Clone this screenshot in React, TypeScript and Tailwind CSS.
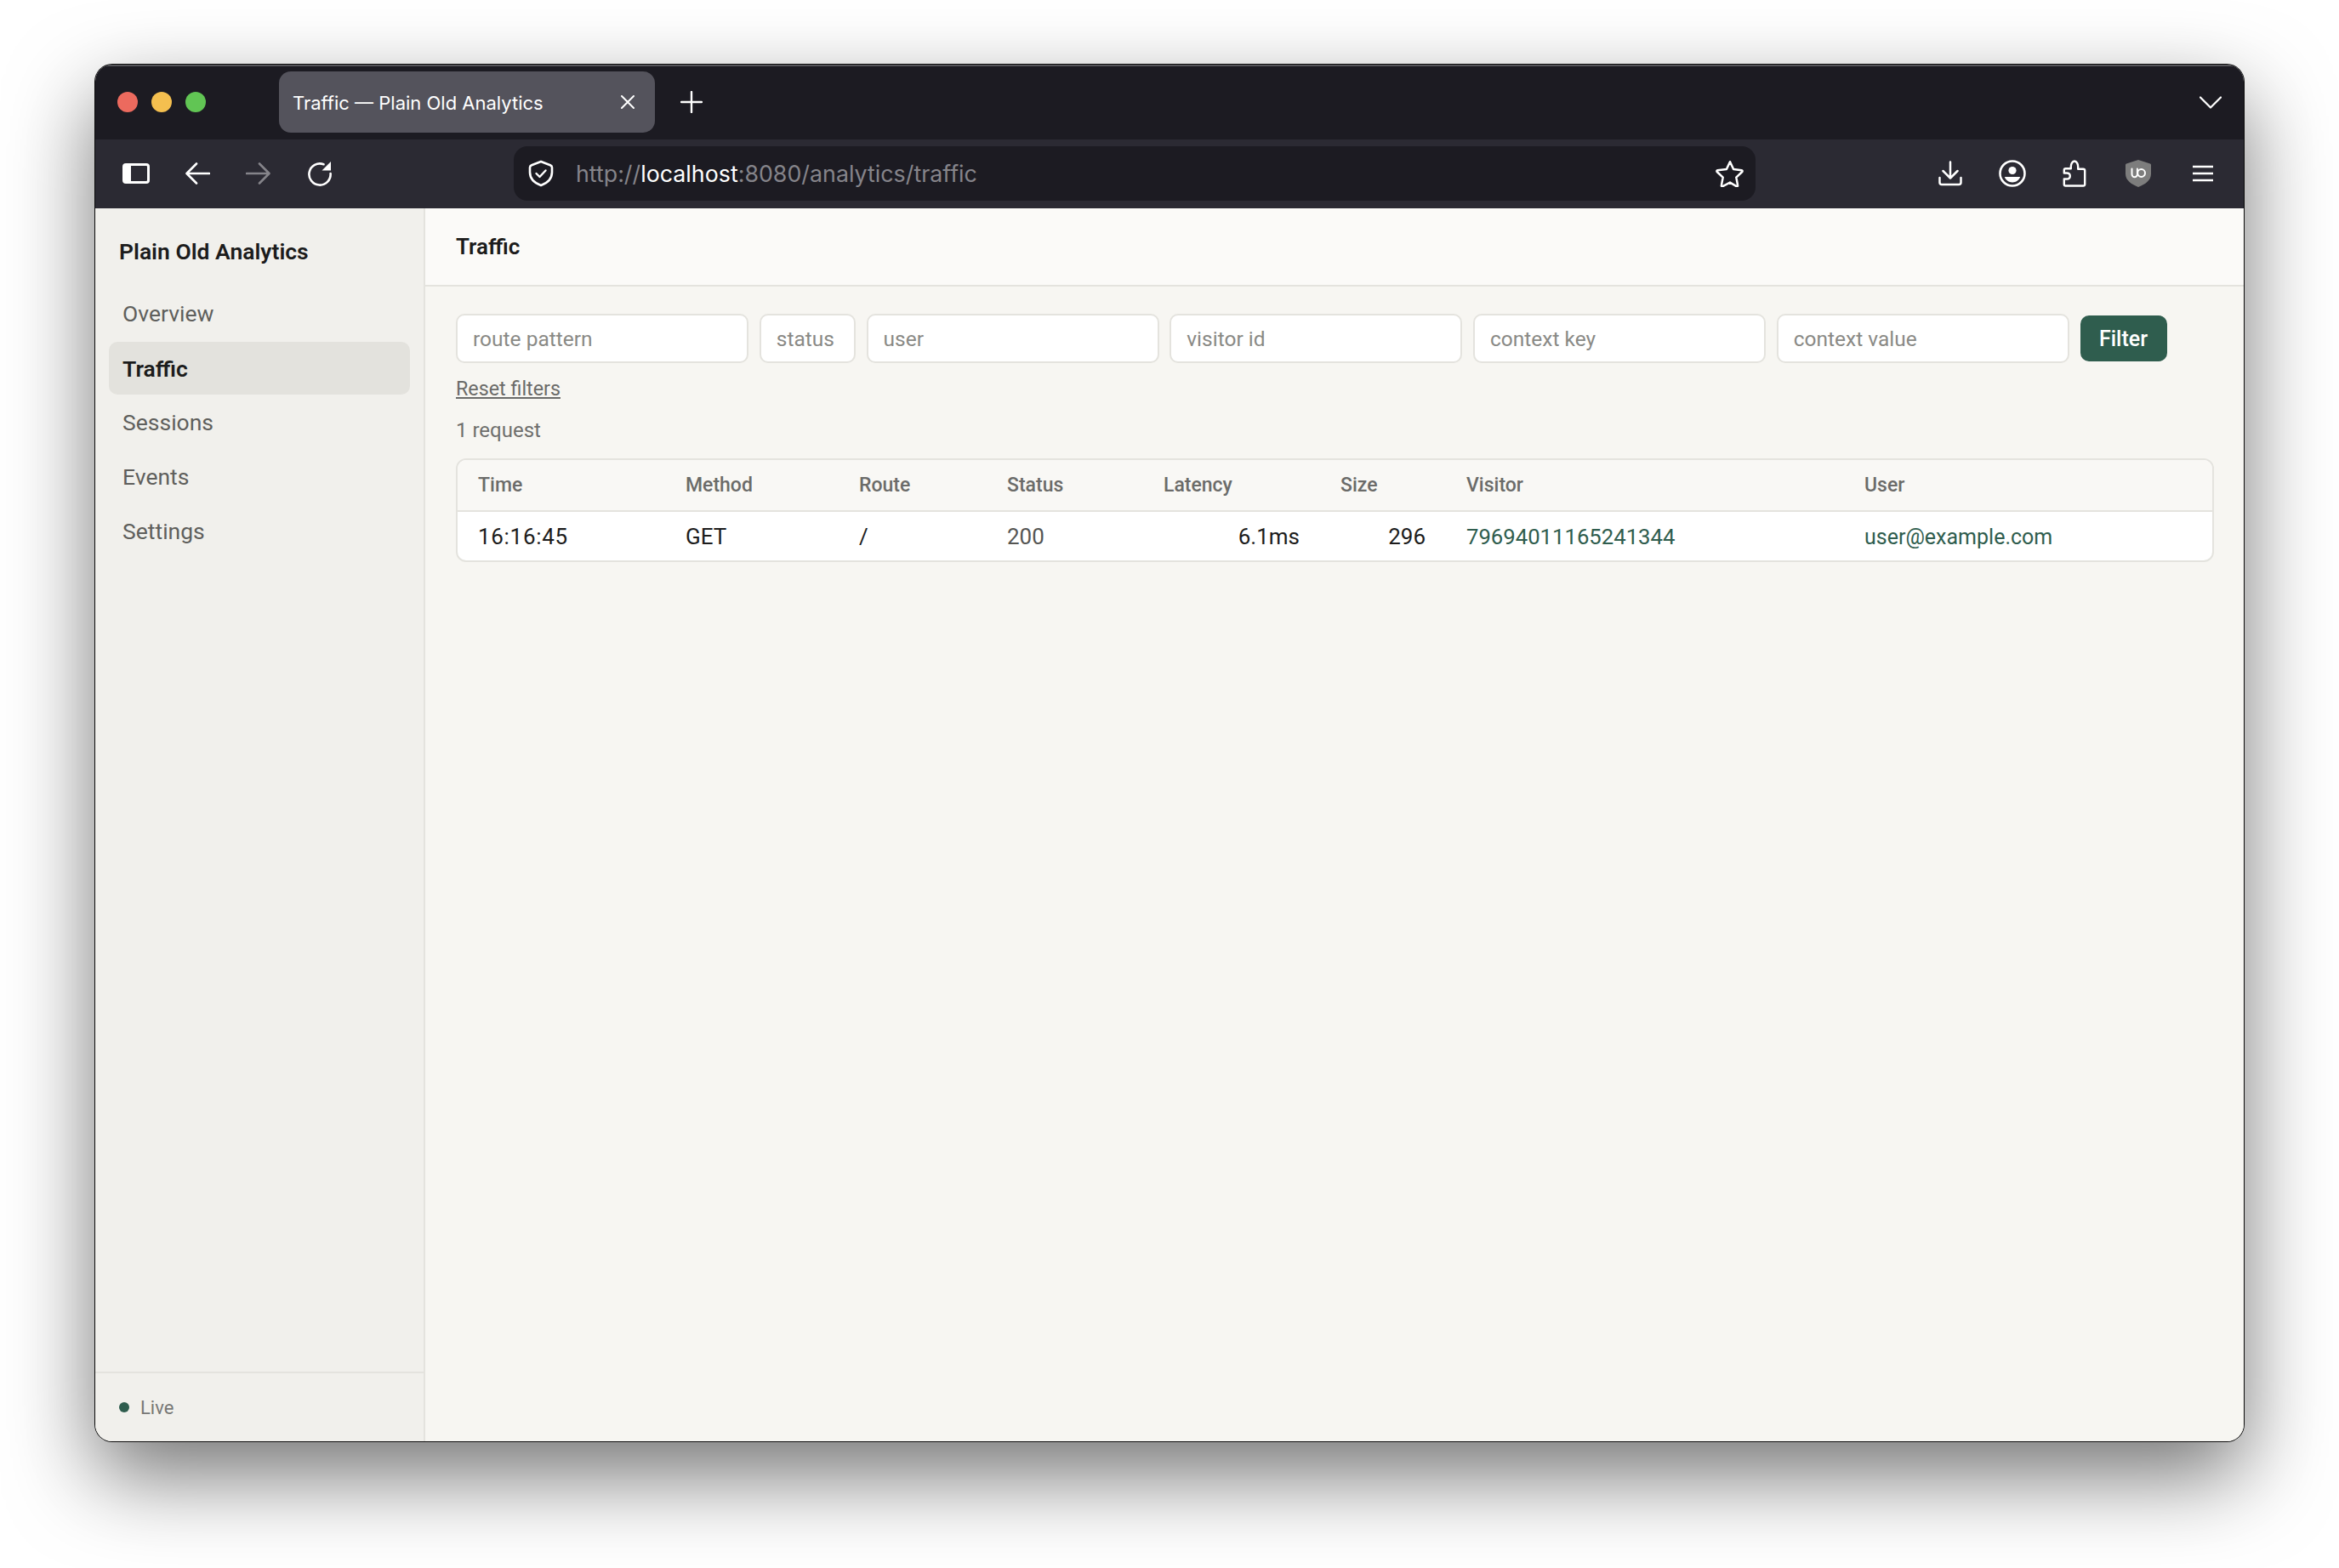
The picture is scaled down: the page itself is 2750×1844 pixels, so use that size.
const columns = [
  { label: "Time", width: "w-[244px]" },
  { label: "Method", width: "w-[204px]" },
  { label: "Route", width: "w-[174px]" },
  { label: "Status", width: "w-[184px]" },
  { label: "Latency", width: "w-[208px]" },
  { label: "Size", width: "w-[148px]" },
  { label: "Visitor", width: "w-[468px]" },
  { label: "User", width: "w-auto" },
];

const navItems = ["Overview", "Traffic", "Sessions", "Events", "Settings"];

function SidebarIcon() {
  return (
    <svg width="32" height="24" viewBox="0 0 32 24" fill="none">
      <rect x="1.5" y="1.5" width="29" height="21" rx="2.5" stroke="#fff" strokeWidth="3" />
      <rect x="2" y="2" width="8" height="20" fill="#fff" />
    </svg>
  );
}

function ArrowIcon({ flip, color }: { flip?: boolean; color: string }) {
  return (
    <svg width="30" height="28" viewBox="0 0 30 28" fill="none" className={flip ? "-scale-x-100" : ""}>
      <path d="M29 14H3M14 2.5 2.5 14 14 25.5" stroke={color} strokeWidth="2.6" strokeLinecap="round" strokeLinejoin="round" />
    </svg>
  );
}

function ReloadIcon() {
  return (
    <svg width="30" height="30" viewBox="0 0 30 30" fill="none">
      <path d="M19.5 4.2A12.6 12.6 0 1 0 27.6 15" stroke="#fff" strokeWidth="2.6" strokeLinecap="round" />
      <path d="M28 1v10.5H17.5z" fill="#fff" />
    </svg>
  );
}

function ShieldCheckIcon() {
  return (
    <svg width="32" height="32" viewBox="0 0 32 32" fill="none">
      <path d="M16 2 27 6.2c1.2.5 2 1.5 2 2.8v5.6c0 7.2-5 12.6-13 15.4C8 27.200 3 21.800 3 14.600V9c0-1.300.8-2.300 2-2.800z" stroke="#fff" strokeWidth="2.6" strokeLinejoin="round" />
      <path d="m10.500 16 4 4 7-7.500" stroke="#fff" strokeWidth="2.4" strokeLinecap="round" strokeLinejoin="round" />
    </svg>
  );
}

function StarIcon() {
  return (
    <svg width="34" height="32" viewBox="0 0 34 32" fill="none">
      <path d="M17 2.200 21.100 11l9.600 1.200c.9.100 1.200 1.200.6 1.800l-7 6.600 1.800 9.400c.2.900-.8 1.600-1.600 1.100L17 26.600l-8.500 4.500c-.8.500-1.800-.2-1.600-1.100l1.800-9.400-7-6.600c-.6-.6-.3-1.700.6-1.800L12.900 11z" stroke="#fff" strokeWidth="2.500" strokeLinejoin="round" />
    </svg>
  );
}

function DownloadIcon() {
  return (
    <svg width="28" height="30" viewBox="0 0 28 30" fill="none">
      <path d="M14 1.500V20M5.500 12 14 20.500 22.500 12" stroke="#fff" strokeWidth="2.500" strokeLinecap="round" strokeLinejoin="round" />
      <path d="M1.500 20v5.500a2.500 2.500 0 0 0 2.500 2.500h20a2.500 2.500 0 0 0 2.500-2.500V20" stroke="#fff" strokeWidth="2.500" strokeLinecap="round" />
    </svg>
  );
}

function AccountIcon() {
  return (
    <svg width="32" height="32" viewBox="0 0 32 32" fill="none">
      <circle cx="16" cy="16" r="14.500" stroke="#fff" strokeWidth="2.600" />
      <circle cx="16" cy="12.500" r="4.600" fill="#fff" />
      <path d="M6.800 20h18.400c-1.500 4-5 6.400-9.200 6.400S8.300 24 6.800 20z" fill="#fff" />
    </svg>
  );
}

function ExtensionIcon() {
  return (
    <svg width="28" height="32" viewBox="0 0 28 32" fill="none">
      <path d="M3.500 30.500c-1 0-1.700-.7-1.700-1.700v-6.300h3c2.400 0 4-1.400 4-3.500s-1.600-3.500-4-3.500h-3v-3.500c0-1 .7-1.700 1.700-1.700h6.300V8c0-3 1.700-6.500 4.200-6.500S18.200 5 18.200 8v2.800h6c1.200 0 2 .8 2 2v15.900c0 1-.8 1.800-2 1.800z" stroke="#fff" strokeWidth="2.400" strokeLinejoin="round" />
    </svg>
  );
}

function UblockIcon() {
  return (
    <svg width="30" height="32" viewBox="0 0 30 32" fill="none">
      <path d="M15 0 29 4.500c.6.200 1 .7 1 1.300v10.700C30 23.500 24 28.500 15 32 6 28.500 0 23.500 0 16.500V5.800c0-.6.4-1.100 1-1.300z" fill="#7d7d7d" />
      <path d="M7.500 10.500v6.500a3.200 3.200 0 0 0 6.400 0v-6.500" stroke="#fff" strokeWidth="2" strokeLinecap="round" />
      <circle cx="18.600" cy="15.500" r="4.400" stroke="#fff" strokeWidth="2" />
    </svg>
  );
}

function MenuIcon() {
  return (
    <svg width="24" height="20" viewBox="0 0 24 20" fill="none">
      <path d="M0 2h24M0 10h24M0 18h24" stroke="#fff" strokeWidth="2.400" />
    </svg>
  );
}

function Field({ placeholder, width }: { placeholder: string; width: string }) {
  return (
    <input
      placeholder={placeholder}
      className={`${width} h-[58px] shrink-0 rounded-[10px] border-2 border-[#e4e3de] bg-white px-[18px] text-[24.5px] text-[#1c1c1c] outline-none placeholder:text-[#8a8a86]`}
    />
  );
}

export default function App() {
  return (
    <div className="h-[1844px] w-[2750px] overflow-hidden bg-white pl-[112px] pt-[76px] font-['Roboto',sans-serif]">
      <div className="flex h-[1619px] w-[2526px] flex-col overflow-hidden rounded-[20px] shadow-[0_0_0_1px_#0a0a0a,0_40px_100px_rgba(0,0,0,0.55)]">
        {/* title bar */}
        <div className="flex h-[88px] shrink-0 items-center border-t-2 border-[#55555a] bg-[#1c1b22] pb-[2px] pl-[26px] pr-[26px] font-['Inter',sans-serif]">
          <div className="flex gap-[16px]">
            <span className="size-[24px] rounded-full bg-[#ec6a5e]" />
            <span className="size-[24px] rounded-full bg-[#f4bf4f]" />
            <span className="size-[24px] rounded-full bg-[#61c554]" />
          </div>
          <div className="ml-[86px] flex h-[72px] w-[442px] items-center justify-between rounded-[14px] bg-[#54535c] pl-[16px] pr-[24px] text-[22px] text-white">
            <span className="pt-[2px]">Traffic — Plain Old Analytics</span>
            <svg width="16" height="16" viewBox="0 0 16 16" fill="none">
              <path d="M1 1l14 14M15 1 1 15" stroke="#fff" strokeWidth="2" strokeLinecap="round" />
            </svg>
          </div>
          <svg width="26" height="26" viewBox="0 0 26 26" fill="none" className="ml-[30px]">
            <path d="M13 1v24M1 13h24" stroke="#fff" strokeWidth="2.400" strokeLinecap="round" />
          </svg>
          <svg width="26" height="15" viewBox="0 0 26 15" fill="none" className="ml-auto">
            <path d="M1 1.500 13 13.500 25 1.500" stroke="#fff" strokeWidth="2.200" strokeLinecap="round" strokeLinejoin="round" />
          </svg>
        </div>

        {/* toolbar */}
        <div className="flex h-[81px] shrink-0 items-center bg-[#2b2a33] pb-[1px] pl-[12px] font-['Inter',sans-serif]">
          <div className="flex w-[72px] justify-center"><SidebarIcon /></div>
          <div className="flex w-[72px] justify-center"><ArrowIcon color="#fff" /></div>
          <div className="flex w-[72px] justify-center"><ArrowIcon flip color="#85848a" /></div>
          <div className="flex w-[72px] justify-center"><ReloadIcon /></div>
          <div className="ml-[192px] flex h-[64px] w-[1460px] items-center rounded-[16px] bg-[#1c1b22] pl-[16px] pr-[13px]">
            <ShieldCheckIcon />
            <div className="ml-[25px] flex-1 text-[26.8px] text-[#85848a]">
              http://<span className="text-white">localhost</span>:8080/analytics/traffic
            </div>
            <StarIcon />
          </div>
          <div className="ml-[193px] flex w-[72px] justify-center"><DownloadIcon /></div>
          <div className="flex w-[73px] justify-center"><AccountIcon /></div>
          <div className="flex w-[73px] justify-center"><ExtensionIcon /></div>
          <div className="flex w-[77px] justify-center"><UblockIcon /></div>
          <div className="flex w-[75px] justify-center"><MenuIcon /></div>
        </div>

        <div className="flex min-h-0 flex-1">
          {/* sidebar */}
          <aside className="flex w-[388px] shrink-0 flex-col border-r-2 border-[#e4e3de] bg-[#f1f0ec]">
            <div className="mb-[24px] ml-[28px] mt-[33px] text-[26.5px] leading-[36px] font-semibold text-[#1c1c1c]">Plain Old Analytics</div>
            <nav className="flex flex-col gap-[2px] px-[16px]">
              {navItems.map((item) =>
                item === "Traffic" ? (
                  <a key={item} className="flex h-[62px] items-center rounded-[10px] bg-[#e3e2dd] px-[16px] pt-[2px] text-[26.5px] font-semibold text-[#1c1c1c]">
                    {item}
                  </a>
                ) : (
                  <a key={item} className="flex h-[62px] items-center px-[16px] text-[26.5px] text-[#5f5f5c]">
                    {item}
                  </a>
                ),
              )}
            </nav>
            <div className="mt-auto flex h-[82px] items-center gap-[13px] border-t-2 border-[#e4e3de] pl-[28px] text-[22px] text-[#777775]">
              <span className="size-[12px] rounded-full bg-[#2f5d4e]" />
              Live
            </div>
          </aside>

          {/* main */}
          <main className="flex min-w-0 flex-1 flex-col bg-[#f7f6f2]">
            <header className="flex h-[92px] shrink-0 items-center border-b-2 border-[#e4e3de] bg-[#fbfaf8] pl-[36px] text-[26px] font-semibold text-[#1c1c1c]">
              Traffic
            </header>
            <div className="pl-[36px] pr-[35px] pt-[32px]">
              <form className="flex h-[58px] items-center gap-[12.75px]">
                <Field placeholder="route pattern" width="w-[344px]" />
                <Field placeholder="status" width="w-[113px]" />
                <Field placeholder="user" width="w-[344px]" />
                <Field placeholder="visitor id" width="w-[344px]" />
                <Field placeholder="context key" width="w-[344px]" />
                <Field placeholder="context value" width="w-[344px]" />
                <button type="button" className="h-[54px] w-[102px] shrink-0 rounded-[10px] bg-[#2f5d4e] pt-[2px] text-[25px] font-medium text-white">
                  Filter
                </button>
              </form>
              <a className="mt-[15px] block w-fit text-[23.3px] leading-[30px] text-[#6b6b69] underline">Reset filters</a>
              <div className="mt-[19px] text-[24px] leading-[30px] text-[#6f6f6d]">1 request</div>
              <div className="mt-[18px] overflow-hidden rounded-[12px] border-2 border-[#e4e3de] bg-white">
                <table className="w-full table-fixed border-collapse">
                  <thead>
                    <tr className="bg-[#f9f8f5]">
                      {columns.map((col) => (
                        <th key={col.label} className={`${col.width} h-[60px] border-b-2 border-[#e4e3de] pl-[24px] pt-[2px] text-left text-[23px] font-medium text-[#6b6b69]`}>
                          {col.label}
                        </th>
                      ))}
                    </tr>
                  </thead>
                  <tbody>
                    <tr className="h-[58px] text-[26px] text-[#1c1c1c]">
                      <td className="pl-[24px] pt-[2px] tracking-[0.7px]">16:16:45</td>
                      <td className="pl-[24px] pt-[2px]">GET</td>
                      <td className="pl-[24px] pt-[2px]">/</td>
                      <td className="pl-[24px] pt-[2px] text-[#555553]">200</td>
                      <td className="pr-[24px] pt-[2px] text-right">6.1ms</td>
                      <td className="pr-[24px] pt-[2px] text-right">296</td>
                      <td className="pl-[24px] pt-[2px] text-[25.7px] text-[#2f5d4e]">79694011165241344</td>
                      <td className="pl-[24px] pt-[2px] text-[25px] text-[#2f5d4e]">user@example.com</td>
                    </tr>
                  </tbody>
                </table>
              </div>
            </div>
          </main>
        </div>
      </div>
    </div>
  );
}
